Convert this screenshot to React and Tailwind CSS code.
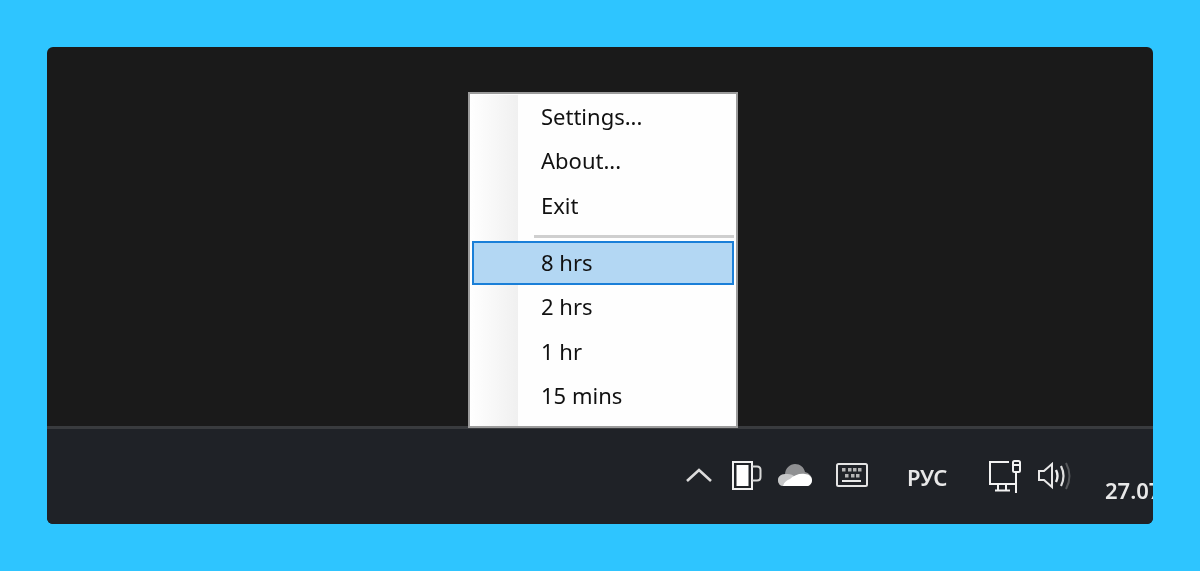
const items = ['Settings...', 'About...', 'Exit'];
const times = ['8 hrs', '2 hrs', '1 hr', '15 mins'];

function MenuRow({ label, active }) {
  return (
    <div className={active
      ? 'h-[44px] pl-[67px] flex items-center border-2 border-[#1a7fd8] bg-[#b3d7f3] relative'
      : 'h-[44.5px] pl-[71px] flex items-center relative'}>
      {label}
    </div>
  );
}

function Chevron() {
  return (
    <svg width="26" height="14" viewBox="0 0 26 14" fill="none" stroke="#dcdcdc" strokeWidth="2.6">
      <path d="M1 13 L13 2 L25 13" />
    </svg>
  );
}

// origin 732,461
function Mug() {
  return (
    <svg width="30" height="30" viewBox="0 0 30 30" fill="none">
      <rect x="1" y="1" width="19" height="27" stroke="#f0f0f0" strokeWidth="2" />
      <rect x="4.5" y="4" width="12" height="21" fill="#ffffff" />
      <path d="M20 5.5 H25 Q28.5 5.5 28.5 9 V16 Q28.5 19.5 25 19.5 H20" stroke="#d8d8d8" strokeWidth="2" />
    </svg>
  );
}

// origin 778,463
function Cloud() {
  return (
    <svg width="34" height="24" viewBox="0 0 34 24">
      <path d="M7 12 C7 5 12 1 17 1 C22 1 26 4 27 9 C31 10 34 13 34 17 C34 21 31 23 29 23 H5 C2 23 0 20 0 17 C0 14 3 11 7 12 Z" fill="#8f9092" />
      <path d="M0 17 C0 14 3 11 7 11 C11 11 13 11 16 13 L11 23 H5 C2 23 0 20 0 17 Z" fill="#c6c7c8" />
      <path d="M5 23 C6 19 9 17 12 16 C16 12 22 10 27 11 C31 11 34 14 34 17 C34 21 31 23 29 23 Z" fill="#ffffff" />
    </svg>
  );
}

// origin 836,463
function Keyboard() {
  const dots = [[6, 5], [12, 5], [17, 5], [22, 5], [9, 11], [15, 11], [20, 11]];
  return (
    <svg width="32" height="24" viewBox="0 0 32 24" fill="none">
      <rect x="1" y="1" width="30" height="22" rx="1.5" stroke="#e4e4e4" strokeWidth="2" />
      {dots.map(([x, y]) => <rect key={x + '-' + y} x={x} y={y} width="3.5" height="3.5" fill="#b4b4b4" />)}
      <rect x="6" y="17" width="19" height="2" fill="#e8e8e8" />
    </svg>
  );
}

// origin 988,459
function Monitor() {
  return (
    <svg width="34" height="35" viewBox="0 0 34 35" fill="none" stroke="#f2f2f2" strokeWidth="2">
      <path d="M21 3 H2 V25 H27" />
      <path d="M10 25 V31 M18 25 V31 M7 31.5 H22" />
      <rect x="25" y="2" width="7" height="11" rx="1.5" />
      <path d="M25 6 H32 M28 13 V34" />
    </svg>
  );
}

// origin 1037,462
function Speaker() {
  return (
    <svg width="34" height="28" viewBox="0 0 34 28" fill="none" strokeWidth="2">
      <path d="M2 9 H7 L15 2 V25 L7 18 H2 Z" stroke="#e8e8e8" />
      <path d="M19 8 Q22 14 19 20" stroke="#f0f0f0" strokeWidth="2.4" />
      <path d="M24 4 Q29 14 24 24" stroke="#e0e0e0" strokeWidth="2.2" />
      <path d="M29 1 Q36 14 29 27" stroke="#55575a" />
    </svg>
  );
}

export default function App() {
  return (
    <div className="w-[1200px] h-[571px] bg-[#2ec5ff] p-[47px] overflow-hidden">
      <div className="w-[1106px] h-[477px] rounded-md overflow-hidden flex flex-col bg-[#1a1a1a]">
        <div className="h-[379px] pl-[421px] pt-[45px] shrink-0">
          <div
            className="w-[270px] h-[336px] bg-[#fefefe] border-2 border-[#9c9c9c] relative flex flex-col text-[22px] text-[#111111] blur-[0.4px]"
            style={{ fontFamily: '"Noto Sans", "Open Sans", sans-serif' }}
          >
            <div className="absolute left-0 top-[1px] bottom-0 w-[48px] bg-gradient-to-r from-[#ffffff] to-[#f0f0f0]" />
            <div>
              {items.map((t) => <MenuRow key={t} label={t} />)}
            </div>
            <div className="relative ml-[64px] mr-[2px] mt-[7px] mb-[3px] h-[3px] bg-[#cfcfcf]" />
            <div className="px-[2px]">
              <MenuRow label={times[0]} active />
            </div>
            {times.slice(1).map((t) => <MenuRow key={t} label={t} />)}
          </div>
        </div>
        <div className="h-[98px] shrink-0 border-t-[3px] border-[#393b3e] bg-[#1f2227] flex items-start pl-[638px] overflow-hidden text-[#e8e8e8]" style={{ fontFamily: '"Noto Sans", "Open Sans", sans-serif' }}>
          <div className="shrink-0 mt-[39px] ml-[1px] blur-[0.4px]"><Chevron /></div>
          <div className="shrink-0 mt-[32px] ml-[20px] blur-[0.4px]"><Mug /></div>
          <div className="shrink-0 mt-[34px] ml-[16px] blur-[0.6px]"><Cloud /></div>
          <div className="shrink-0 mt-[34px] ml-[24px] blur-[0.4px]"><Keyboard /></div>
          <div className="shrink-0 mt-[34px] ml-[39px] text-[22px] leading-[28px] font-semibold w-[50px] blur-[0.4px]">РУС</div>
          <div className="shrink-0 mt-[30px] ml-[31px] blur-[0.3px]"><Monitor /></div>
          <div className="shrink-0 mt-[33px] ml-[15px] blur-[0.4px]"><Speaker /></div>
          <div className="shrink-0 mt-[47px] ml-[34px] text-[22px] leading-[28px] font-semibold whitespace-nowrap blur-[0.4px]">27.07.2021</div>
        </div>
      </div>
    </div>
  );
}
